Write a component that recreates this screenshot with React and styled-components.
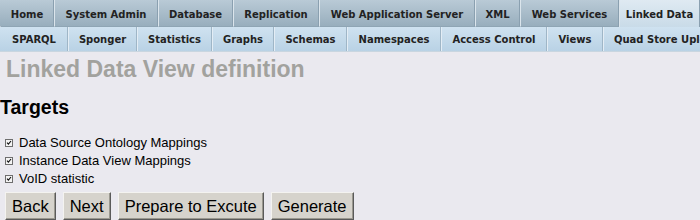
import React from "react";
import styled, { createGlobalStyle } from "styled-components";

const Global = createGlobalStyle`
  body {
    margin: 0;
    background: #eae9ef;
    font-family: "Liberation Sans", Arial, sans-serif;
  }
`;

const Page = styled.div`
  width: 700px;
  height: 220px;
  overflow: hidden;
`;

const TabRow = styled.div`
  display: flex;
  height: 27px;
  white-space: nowrap;
`;

const Tab = styled.div`
  display: flex;
  align-items: center;
  justify-content: center;
  width: ${(p) => (p.$w ? `${p.$w}px` : "auto")};
  flex: ${(p) => (p.$w ? "0 0 auto" : "1 0 auto")};
  padding: 2px 0 0 0;
  border-left: 1px solid ${(p) => (p.$first ? "transparent" : "#dbe5ec")};
  border-right: 1px solid #8aa0b0;
  font-family: "DejaVu Sans", Verdana, sans-serif;
  font-weight: bold;
  font-size: 10px;
  color: #222;
  background: ${(p) =>
    p.$active
      ? "linear-gradient(#dfeaf2, #c9dbe8)"
      : "linear-gradient(#b9cad6, #98aebd)"};
  border-bottom: ${(p) => (p.$active ? "none" : "1px solid #8fa5b4")};
  box-sizing: border-box;
`;

const SubRow = styled.div`
  display: flex;
  height: 24px;
  white-space: nowrap;
  background: linear-gradient(#cfe2f0, #b9d2e5);
  border-bottom: 1px solid #c9d6e0;
`;

const SubTab = styled.div`
  display: flex;
  align-items: center;
  justify-content: ${(p) => (p.$w ? "center" : "flex-start")};
  width: ${(p) => (p.$w ? `${p.$w}px` : "auto")};
  flex: ${(p) => (p.$w ? "0 0 auto" : "1 0 auto")};
  padding: ${(p) => (p.$w ? "0" : "0 0 0 10px")};
  border-left: 1px solid ${(p) => (p.$first ? "transparent" : "#e3edf5")};
  border-right: 1px solid #9fb6c7;
  font-family: "DejaVu Sans", Verdana, sans-serif;
  font-weight: bold;
  font-size: 10px;
  color: #222;
  box-sizing: border-box;
`;

const Title = styled.h1`
  margin: 4px 0 0 6px;
  font-size: 23px;
  font-weight: bold;
  color: #a2a29e;
  line-height: 26px;
`;

const Section = styled.h2`
  margin: 14px 0 0 0;
  font-size: 19.5px;
  font-weight: bold;
  color: #000;
  line-height: 22px;
`;

const List = styled.div`
  margin-top: 15px;
  display: flex;
  flex-direction: column;
`;

const Option = styled.label`
  display: flex;
  align-items: center;
  height: 18px;
  font-size: 13px;
  color: #000;
`;

const Box = styled.svg`
  width: 8px;
  height: 8px;
  margin: 1px 6px 0 5px;
`;

const Buttons = styled.div`
  display: flex;
  gap: 7px;
  margin: 5px 0 0 5px;
`;

const Button = styled.button`
  font-family: "Liberation Sans", Arial, sans-serif;
  font-size: 16.5px;
  height: 28px;
  padding: 0 6px;
  background: #d6d3cc;
  color: #000;
  border: 1px solid;
  border-color: #f4f3f0 #5a5a5a #5a5a5a #f4f3f0;
  box-shadow: inset -1px -1px 0 #9a988f;
  border-radius: 0;
`;

const Check = () => (
  <Box viewBox="0 0 8 8">
    <rect x="0.5" y="0.5" width="7" height="7" fill="#f4f4f4" stroke="#6e6e6e" />
    <path d="M2 3.6 L3.4 5.2 L6 2" fill="none" stroke="#111" strokeWidth="1.1" />
  </Box>
);

const mainTabs = [
  { label: "Home", w: 54 },
  { label: "System Admin", w: 104 },
  { label: "Database", w: 75 },
  { label: "Replication", w: 86 },
  { label: "Web Application Server", w: 156 },
  { label: "XML", w: 45 },
  { label: "Web Services", w: 99 },
  { label: "Linked Data", active: true },
];

const subTabs = [
  { label: "SPARQL", w: 68 },
  { label: "Sponger", w: 69 },
  { label: "Statistics", w: 75 },
  { label: "Graphs", w: 62 },
  { label: "Schemas", w: 73 },
  { label: "Namespaces", w: 94 },
  { label: "Access Control", w: 106 },
  { label: "Views", w: 56 },
  { label: "Quad Store Upload" },
];

const options = [
  "Data Source Ontology Mappings",
  "Instance Data View Mappings",
  "VoID statistic",
];

const App = () => {
  return (
    <Page>
      <Global />
      <TabRow>
        {mainTabs.map((t, i) => (
          <Tab key={t.label} $first={i === 0} $w={t.w} $active={t.active}>
            {t.label}
          </Tab>
        ))}
      </TabRow>
      <SubRow>
        {subTabs.map((t, i) => (
          <SubTab key={t.label} $first={i === 0} $w={t.w}>
            {t.label}
          </SubTab>
        ))}
      </SubRow>
      <Title>Linked Data View definition</Title>
      <Section>Targets</Section>
      <List>
        {options.map((o) => (
          <Option key={o}>
            <Check />
            {o}
          </Option>
        ))}
      </List>
      <Buttons>
        <Button>Back</Button>
        <Button>Next</Button>
        <Button>Prepare to Excute</Button>
        <Button>Generate</Button>
      </Buttons>
    </Page>
  );
};

export default App;
